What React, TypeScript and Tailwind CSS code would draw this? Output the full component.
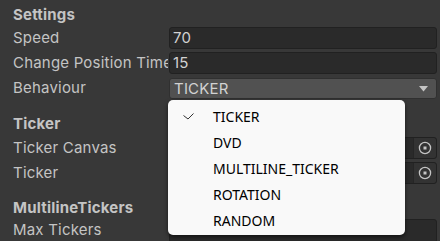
import React from "react";

const labelCls =
  "w-[168px] shrink-0 pl-[13px] overflow-hidden whitespace-nowrap text-[15px] tracking-[0.2px] text-[#c4c4c4] leading-[22px]";
const headerCls =
  "pl-[13px] text-[15px] font-bold tracking-[0.2px] text-[#c4c4c4] leading-[22px] whitespace-nowrap";

function Field({ value }: { value: string }) {
  return (
    <div className="ml-[1px] mr-[3px] flex-1 h-[22px] rounded-[3px] border border-[#212121] bg-[#2a2a2a] pl-[3px] text-[15px] tracking-[0.2px] leading-[20px] text-[#d2d2d2]">
      {value}
    </div>
  );
}

function ObjectField() {
  return (
    <div className="ml-[1px] mr-[3px] flex-1 h-[22px] rounded-[3px] border border-[#212121] bg-[#2a2a2a] flex justify-end overflow-hidden">
      <div className="w-[23px] h-full bg-[#333333] rounded-r-[2px] border-l border-[#262626] flex items-center justify-center">
        <svg width="14" height="14" viewBox="0 0 14 14">
          <circle cx="7" cy="7" r="5.6" fill="none" stroke="#c4c4c4" strokeWidth="1.3" />
          <rect x="5.5" y="5.5" width="3" height="3" fill="#c4c4c4" />
        </svg>
      </div>
    </div>
  );
}

export default function App() {
  const items = ["TICKER", "DVD", "MULTILINE_TICKER", "ROTATION", "RANDOM"];
  return (
    <div
      className="relative w-[440px] h-[241px] overflow-hidden bg-[#383838] pt-[4px]"
      style={{ fontFamily: "Inter, 'Noto Sans', sans-serif" }}
    >
      <div className={headerCls + " h-[23px]"}>Settings</div>
      <div className="flex h-[22px] items-center">
        <div className={labelCls}>Speed</div>
        <Field value="70" />
      </div>
      <div className="flex h-[22px] items-center mt-[3px]">
        <div className={labelCls}>Change Position Time</div>
        <Field value="15" />
      </div>
      <div className="flex h-[22px] items-center mt-[3px]">
        <div className={labelCls}>Behaviour</div>
        <div className="ml-[1px] mr-[3px] flex-1 h-[21px] mt-[1px] rounded-[3px] border border-[#303030] bg-[#515151] pl-[4px] pr-[8px] flex items-center justify-between text-[15px] tracking-[0.2px] text-[#d2d2d2]">
          <span className="leading-[19px]">TICKER</span>
          <svg width="9" height="6" viewBox="0 0 9 6">
            <polygon points="0,0 9,0 4.5,5.5" fill="#c4c4c4" />
          </svg>
        </div>
      </div>

      <div className={headerCls + " mt-[14px] h-[22px]"}>Ticker</div>
      <div className="flex h-[22px] items-center mt-[2px]">
        <div className={labelCls}>Ticker Canvas</div>
        <ObjectField />
      </div>
      <div className="flex h-[22px] items-center mt-[3px]">
        <div className={labelCls}>Ticker</div>
        <ObjectField />
      </div>

      <div className={headerCls + " mt-[13px] h-[22px]"}>MultilineTickers</div>
      <div className="flex h-[22px] items-center">
        <div className={labelCls}>Max Tickers</div>
        <div className="ml-[1px] mr-[3px] flex-1 h-[24px] mt-[2px] rounded-[3px] border border-[#212121] bg-[#2a2a2a]" />
      </div>

      <div
        className="absolute left-[168px] top-[100px] w-[237px] h-[135px] rounded-[5px] bg-[#f9f9f9] pt-[3px] shadow-[0_2px_4px_rgba(0,0,0,0.55)]"
        style={{ fontFamily: "'Noto Sans', 'Open Sans', sans-serif" }}
      >
        {items.map((it, i) => (
          <div key={it} className="relative h-[26px] flex items-center pl-[45px] text-[14px] text-black">
            {i === 0 && (
              <svg className="absolute left-[15px] top-[10px]" width="11" height="7" viewBox="0 0 11 7">
                <polyline points="0.5,2.5 5,6 10.5,0.5" fill="none" stroke="#333" strokeWidth="1" />
              </svg>
            )}
            <span>{it}</span>
          </div>
        ))}
      </div>
    </div>
  );
}
